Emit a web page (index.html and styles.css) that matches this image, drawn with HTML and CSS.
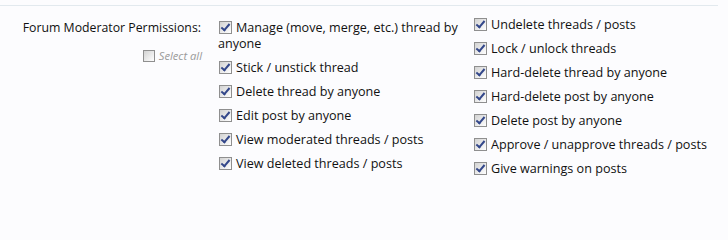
FILE: index.html
```html
<!DOCTYPE html>
<html>
<head>
<meta charset="utf-8">
<link rel="stylesheet" href="styles.css">
</head>
<body>
<div class="rule"></div>
<div class="ctrl">
  <div class="label">
    <div class="title">Forum Moderator Permissions:</div>
    <label class="selectall"><span class="cb"></span><span class="sa-text">Select all</span></label>
  </div>
  <div class="cols">
    <ul class="col col1">
      <li><span class="cb on"></span>Manage (move, merge, etc.) thread by anyone</li>
      <li><span class="cb on"></span>Stick / unstick thread</li>
      <li><span class="cb on"></span>Delete thread by anyone</li>
      <li><span class="cb on"></span>Edit post by anyone</li>
      <li><span class="cb on"></span>View moderated threads / posts</li>
      <li><span class="cb on"></span>View deleted threads / posts</li>
    </ul>
    <ul class="col col2">
      <li><span class="cb on"></span>Undelete threads / posts</li>
      <li><span class="cb on"></span>Lock / unlock threads</li>
      <li><span class="cb on"></span>Hard-delete thread by anyone</li>
      <li><span class="cb on"></span>Hard-delete post by anyone</li>
      <li><span class="cb on"></span>Delete post by anyone</li>
      <li><span class="cb on"></span>Approve / unapprove threads / posts</li>
      <li><span class="cb on"></span>Give warnings on posts</li>
    </ul>
  </div>
</div>
</body>
</html>
```
FILE: styles.css
```css
html, body {
  margin: 0;
  padding: 0;
  background: #fcfcfe;
}
body {
  font-family: "Open Sans", "Noto Sans", sans-serif;
  font-size: 12.6px;
  color: #111111;
  width: 728px;
  height: 202px;
  overflow: hidden;
}
.rule {
  margin-top: 5px;
  width: 718px;
  height: 1px;
  background: #e2e9ee;
}
.ctrl {
  display: flex;
  padding-top: 14px;
}
.label {
  width: 204px;
  display: flex;
  flex-direction: column;
  align-items: flex-end;
}
.title {
  line-height: 16px;
  font-size: 12.3px;
  padding-right: 1px;
}
.selectall {
  margin-top: 13px;
  display: flex;
  align-items: center;
  gap: 4px;
  font-style: italic;
  font-size: 11.2px;
  color: #9a9a9a;
  line-height: 14px;
}
.selectall .cb {
  width: 12px;
  height: 12px;
  margin-right: 0;
}
.cols {
  display: flex;
  margin-left: 16px;
}
.col {
  list-style: none;
  margin: 0;
  padding: 0;
  width: 255px;
}
.col2 {
  margin-top: -3px;
}
.col li {
  line-height: 16px;
  margin-bottom: 8px;
}
.cb {
  display: inline-block;
  box-sizing: border-box;
  width: 13px;
  height: 13px;
  border: 1px solid #8f8f8f;
  background: linear-gradient(135deg, #d2d2d2 0%, #efefef 65%, #ffffff 100%);
  vertical-align: -2px;
  margin-left: 1px;
  margin-right: 4px;
  position: relative;
}
.cb.on::after {
  content: "";
  position: absolute;
  left: 3px;
  top: 0px;
  width: 3px;
  height: 7px;
  border-right: 2px solid #33478a;
  border-bottom: 2px solid #33478a;
  transform: rotate(40deg);
}
```
